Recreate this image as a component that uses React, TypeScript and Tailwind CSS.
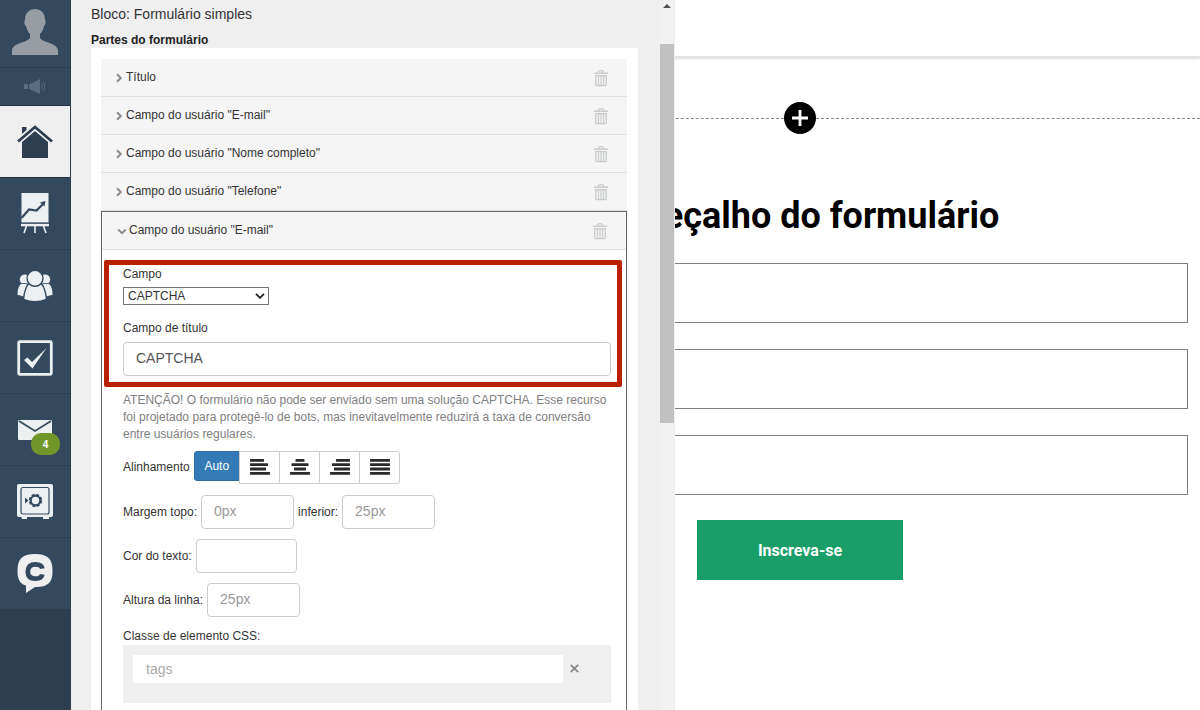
import React from "react";

const SidebarItem = ({ label, children, className }: { label: string; children: React.ReactNode; className: string }) => (
  <a href="#" aria-label={label} className={`relative flex items-center justify-center border-b ${className}`}>
    {children}
  </a>
);

const Trash = () => (
  <svg viewBox="0 0 14 18" className="h-[18px] w-[14px]" fill="none" stroke="#c8caca">
    <path d="M4 3.500Q4.500 1.600 7 1.600Q9.500 1.600 10 3.500" strokeWidth="1.300" />
    <path d="M0 4.200H14" strokeWidth="1.500" />
    <path d="M1.700 6.600H12.300V15.800Q12.300 16.700 11.400 16.700H2.600Q1.700 16.700 1.700 15.800Z" fill="#eff1f1" strokeWidth="1.200" />
    <path d="M4.400 7V16M7 7V16M9.600 7V16" strokeWidth="1" />
  </svg>
);

const Chevron = ({ open = false }: { open?: boolean }) => (
  <svg viewBox="0 0 10 10" className="h-[10px] w-[10px] shrink-0" fill="none" stroke="#8c8c8c" strokeWidth="2">
    <path d={open ? "M1.2 3.500L5 7.200L8.800 3.500" : "M3 1.200L6.800 5L3 8.800"} />
  </svg>
);

const PartRow = ({ title }: { title: string }) => (
  <li className="flex h-[38px] items-center justify-between border-b border-[#e0e0e0] bg-[#f5f5f5] pl-[13px] pr-[19px]">
    <button type="button" className="flex items-center gap-[2px]">
      <Chevron />
      {title}
    </button>
    <button type="button" aria-label={`Excluir ${title}`}>
      <Trash />
    </button>
  </li>
);

const bars: Record<string, [number, number][]> = {
  Esquerda: [[0, 14], [0, 18], [0, 16], [0, 20]],
  Centro: [[5.5, 9], [1.5, 17], [4, 12], [0, 20]],
  Direita: [[6, 14], [2, 18], [4, 16], [0, 20]],
  Justificado: [[0, 20], [0, 20], [0, 20], [0, 20]],
};

const inputClass = "h-[34px] rounded border border-[#cccccc] bg-white px-3 pb-[2px] text-sm text-[#555555] placeholder:text-[#999999]";

export default function App() {
  return (
    <div className="flex h-screen overflow-hidden bg-white font-['Liberation_Sans',Arial,sans-serif] text-[12px] leading-[17px] text-[#333333]">
      <nav className="relative z-20 flex w-[71px] shrink-0 flex-col border-r border-[#2c3e50] bg-[#2c3e50]">
        <SidebarItem label="Perfil" className="h-[68px] border-[#2c3e50] bg-[#35495e]">
          <svg viewBox="0 0 48 46" className="mb-[4px] h-[46px] w-[48px]" fill="#989da3">
            <path d="M24 0C30 0 34 4 34 11C35 11 35 16 33 17C32 21 31 23 29 25V29C32 34 45 33 47 41V46H1V41C3 33 16 34 19 29V25C17 23 16 21 15 17C13 16 13 11 14 11C14 4 18 0 24 0Z" />
          </svg>
        </SidebarItem>
        <SidebarItem label="Novidades" className="h-[38px] border-[#22303f] bg-[#35495e]">
          <svg viewBox="0 0 22 15" className="h-[15px] w-[22px]" fill="#586c82">
            <path d="M0 5H4V10H0ZM5 5.500L16 0V15L5 10Z" />
            <path d="M17.500 5Q19 7.500 17.500 10M19 2.500Q22.500 7.500 19 12.500" fill="none" stroke="#586c82" />
          </svg>
        </SidebarItem>
        <SidebarItem label="Início" className="h-[72px] border-[#22303f] bg-[#efefef]">
          <svg viewBox="0 0 36 33" className="h-[33px] w-[36px]" fill="#2c3e50">
            <path d="M5 2H9.500V5L5 9ZM5 17L18 6L31 17V33H5Z" />
            <path d="M1 16.500L18 2L35 16.500" fill="none" stroke="#efefef" strokeWidth="5" />
            <path d="M1 16.500L18 2L35 16.500" fill="none" stroke="#2c3e50" strokeWidth="2.800" />
          </svg>
        </SidebarItem>
        <SidebarItem label="Relatórios" className="h-[72px] border-[#2c3e50] bg-[#35495e]">
          <svg viewBox="0 0 30 41" className="h-[41px] w-[30px]">
            <path d="M1.500 0H28.500V29.500H1.500Z" fill="#ecf0f1" />
            <path d="M1 32H29" stroke="#ecf0f1" strokeWidth="2.600" />
            <path d="M1 30.200H29" stroke="#35495e" strokeWidth=".8" />
            <path d="M6.500 33L4 40M15 33V40M23.500 33L26 40" stroke="#ecf0f1" strokeWidth="1.600" />
            <path d="M1.500 25L9 16.500L16.500 17.500L23 11" fill="none" stroke="#35495e" strokeWidth="2.200" />
            <path d="M20 9.500L25.500 8L24.500 13.500Z" fill="#35495e" />
          </svg>
        </SidebarItem>
        <SidebarItem label="Usuários" className="h-[72px] border-[#2c3e50] bg-[#35495e]">
          <svg viewBox="0 0 36 32" className="h-[32px] w-[36px]" fill="#ecf0f1" stroke="#35495e">
            <g strokeWidth=".8">
              <circle cx="8" cy="9.500" r="5.500" />
              <circle cx="28" cy="9.500" r="5.500" />
              <path d="M4 13.500H10L12 23L7 27L0 25Q0 17 4 13.500ZM32 13.500H26L24 23L29 27L36 25Q36 17 32 13.500Z" />
            </g>
            <path d="M12 13.500H24Q28.500 18 29.500 29.500Q18 34 6.500 29.500Q7.500 18 12 13.500Z" strokeWidth="1.400" />
            <circle cx="18" cy="8.300" r="8" strokeWidth="1.400" />
          </svg>
        </SidebarItem>
        <SidebarItem label="Tarefas" className="h-[72px] border-[#2c3e50] bg-[#35495e]">
          <svg viewBox="0 0 36 36" className="h-[36px] w-[36px]">
            <rect x="1.700" y="1.700" width="32.600" height="32.600" rx="1" fill="none" stroke="#ecf0f1" strokeWidth="2.800" />
            <path d="M7 20L10.500 17.500L15 22L29.500 8L15.500 28.500Z" fill="#ecf0f1" />
          </svg>
        </SidebarItem>
        <SidebarItem label="Mensagens" className="h-[72px] border-[#2c3e50] bg-[#35495e]">
          <svg viewBox="0 0 34 20" className="h-[20px] w-[34px]">
            <rect width="34" height="20" rx="1" fill="#ecf0f1" />
            <path d="M1 1L17 11L33 1" fill="none" stroke="#35495e" strokeWidth="1.700" />
          </svg>
          <span className="absolute left-[31px] top-[39px] flex h-[22px] w-[29px] items-center justify-center rounded-[10px] bg-[#71972b] text-[10px] font-bold text-white">4</span>
        </SidebarItem>
        <SidebarItem label="Cofre" className="h-[72px] border-[#2c3e50] bg-[#35495e]">
          <svg viewBox="0 0 36 35" className="h-[35px] w-[36px]">
            <rect width="36" height="33" rx="2" fill="#ecf0f1" />
            <path d="M4 32H10V35H5ZM26 32H32V35H26Z" fill="#ecf0f1" />
            <rect x="4" y="3.500" width="28" height="26.500" rx="2" fill="none" stroke="#35495e" strokeWidth="1.200" />
            <path d="M8 13.500L11.500 16.500L8 19.500Z" fill="#35495e" />
            <circle cx="18.500" cy="16.500" r="4.700" fill="none" stroke="#35495e" strokeWidth="2" />
            <circle cx="18.500" cy="16.500" r="5.800" fill="none" stroke="#35495e" strokeWidth="1.800" strokeDasharray="3.050 1.500" />
          </svg>
        </SidebarItem>
        <SidebarItem label="Chat" className="h-[72px] border-[#2c3e50] bg-[#35495e]">
          <svg viewBox="0 0 36 39" className="h-[39px] w-[36px]">
            <path d="M18 0C31 0 35.500 5 35.500 17C35.500 29 31 33 18 33L9 39V31.500C2.500 29.500 .5 25 .5 17C.5 5 5 0 18 0Z" fill="#efefef" />
            <path d="M25.300 14.600Q24.500 10.300 18.500 10.300Q10.800 10.300 10.800 17.500Q10.800 24.700 18.500 24.700Q24.500 24.700 25.300 20.400" fill="none" stroke="#35495e" strokeWidth="4.800" />
          </svg>
        </SidebarItem>
      </nav>

      <section className="relative z-10 flex w-[604px] shrink-0 bg-[#efefef]">
        <div className="min-w-0 flex-1 pl-5 pr-[21px] pt-[5px]">
          <h1 className="text-[14px] leading-[18px]">Bloco: Formulário simples</h1>
          <h2 className="mt-[10px] font-bold leading-[15px] text-[#222222]">Partes do formulário</h2>
          <div className="bg-white pl-[10px] pr-[11px] pt-[11px]">
            <ul>
              <PartRow title="Título" />
              <PartRow title={'Campo do usuário "E-mail"'} />
              <PartRow title={'Campo do usuário "Nome completo"'} />
              <PartRow title={'Campo do usuário "Telefone"'} />
              <li className="border border-[#666666] pb-8">
                <div className="flex h-[38px] items-center justify-between border-b border-[#e0e0e0] bg-[#f5f5f5] pl-[15px] pr-[19px]">
                  <button type="button" className="flex items-center gap-[2px]">
                    <Chevron open />
                    Campo do usuário "E-mail"
                  </button>
                  <button type="button" aria-label="Excluir campo">
                    <Trash />
                  </button>
                </div>
                <div className="pl-[21px] pr-[15px] pt-4">
                  <div className="relative">
                    <div className="pointer-events-none absolute -bottom-[11px] -left-[19px] -right-[11px] -top-[6px] rounded-[2px] border-[5px] border-[#b92000]" />
                    <label htmlFor="campo" className="block">Campo</label>
                    <div className="relative mt-1 w-[146px]">
                      <select id="campo" className="block h-[18px] w-full appearance-none border border-[#767676] bg-white pl-1 text-[12px] leading-[16px]">
                        <option>CAPTCHA</option>
                      </select>
                      <svg viewBox="0 0 10 6" className="pointer-events-none absolute right-[4px] top-[6px] h-[6px] w-[10px]" fill="none" stroke="#222222" strokeWidth="1.800">
                        <path d="M1 .8L5 4.800L9 .8" />
                      </svg>
                    </div>
                    <label htmlFor="titulo" className="mt-[15px] block">Campo de título</label>
                    <input id="titulo" defaultValue="CAPTCHA" className={`${inputClass} mt-[5px] block w-full`} />
                  </div>
                  <p className="mt-4 text-[#808080]">
                    ATENÇÃO! O formulário não pode ser enviado sem uma solução CAPTCHA. Esse recurso foi projetado para protegê-lo de bots, mas inevitavelmente reduzirá a taxa de conversão entre usuários regulares.
                  </p>
                  <div className="mt-2 flex gap-[4px]">
                    <span className="mt-2">Alinhamento</span>
                    <div className="flex items-start">
                      <button type="button" className="h-[30px] w-[46px] rounded-l-[3px] border border-[#2e6da4] bg-[#337ab7] text-[12px] text-white">Auto</button>
                      {Object.entries(bars).map(([name, rows]) => (
                        <button key={name} type="button" aria-label={name} className="-ml-px flex h-[33px] w-[41px] items-center justify-center border border-[#cccccc] bg-white pb-px pl-[2px] last:rounded-r-[3px]">
                          <svg viewBox="0 0 20 16" className="h-[16px] w-[20px]" fill="#2b2b2b">
                            {rows.map(([x, w], i) => (
                              <rect key={i} x={x} y={i * 4.3} width={w} height="2.800" rx=".5" />
                            ))}
                          </svg>
                        </button>
                      ))}
                    </div>
                  </div>
                  <div className="mt-[11px] flex items-center gap-[4px]">
                    <label htmlFor="topo">Margem topo:</label>
                    <input id="topo" placeholder="0px" className={`${inputClass} w-[93px]`} />
                    <label htmlFor="inferior">inferior:</label>
                    <input id="inferior" placeholder="25px" className={`${inputClass} w-[93px]`} />
                  </div>
                  <div className="mt-[10px] flex items-center gap-[4px]">
                    <label htmlFor="cor">Cor do texto:</label>
                    <input id="cor" className={`${inputClass} w-[101px]`} />
                  </div>
                  <div className="mt-[10px] flex items-center gap-[4px]">
                    <label htmlFor="altura">Altura da linha:</label>
                    <input id="altura" placeholder="25px" className={`${inputClass} w-[93px]`} />
                  </div>
                  <label htmlFor="tags" className="mt-[11px] block">Classe de elemento CSS:</label>
                  <div className="flex h-[58px] items-start bg-[#efefef] py-[10px] pl-[10px] pr-8">
                    <input id="tags" placeholder="tags" className="h-[28px] min-w-0 flex-1 bg-white px-[13px] text-sm placeholder:text-[#aaaaaa]" />
                    <button type="button" aria-label="Remover" className="flex h-[27px] w-4 items-center justify-end">
                      <svg viewBox="0 0 9 9" className="h-[9px] w-[9px]" stroke="#888888" strokeWidth="1.800">
                        <path d="M.8 .8L8.200 8.200M8.200 .8L.8 8.200" />
                      </svg>
                    </button>
                  </div>
                </div>
              </li>
            </ul>
          </div>
        </div>
        <div className="flex w-4 shrink-0 flex-col items-center bg-[#f1f1f1] pt-[4px]">
          <svg viewBox="0 0 8 4" className="h-[4px] w-[8px]" fill="#505050">
            <path d="M0 4L4 0L8 4Z" />
          </svg>
          <div className="mt-[36px] h-[379px] w-[14px] bg-[#c1c1c1]" />
        </div>
      </section>

      <main className="-ml-[275px] min-w-0 flex-1 font-['Roboto',sans-serif] text-black">
        <div className="h-[58px] border-b-2 border-[#e4e4e4] shadow-sm" />
        <div className="mt-[44px] flex items-center">
          <div className="flex-1 border-t border-dashed border-[#888888]" />
          <button type="button" aria-label="Adicionar bloco" className="flex h-8 w-8 items-center justify-center rounded-full bg-black">
            <svg viewBox="0 0 16 16" className="h-4 w-4" stroke="white" strokeWidth="2.800">
              <path d="M8 0V16M0 8H16" />
            </svg>
          </button>
          <div className="flex-1 border-t border-dashed border-[#888888]" />
        </div>
        <form className="flex flex-col items-center px-3 pt-[58px]">
          <h2 className="text-[36px] font-bold leading-[48px]">Cabeçalho do formulário</h2>
          <input aria-label="E-mail" className="mt-[23px] h-[60px] w-full border border-[#808080]" />
          <input aria-label="Nome completo" className="mt-[26px] h-[60px] w-full border border-[#808080]" />
          <input aria-label="Telefone" className="mt-[26px] h-[60px] w-full border border-[#808080]" />
          <button type="button" className="mt-[25px] h-[60px] w-[206px] bg-[#1a9e69] pt-[2px] text-base font-bold text-white">Inscreva-se</button>
        </form>
      </main>
    </div>
  );
}
